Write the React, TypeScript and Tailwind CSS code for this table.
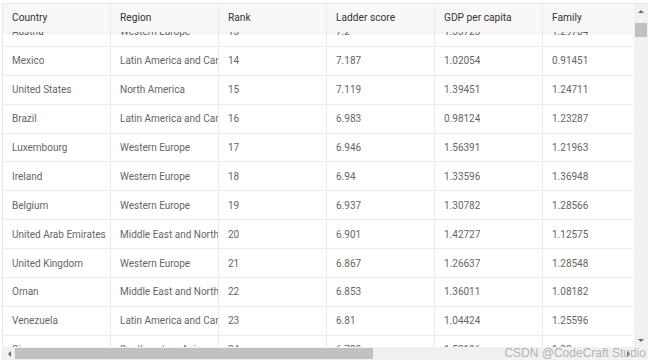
const columns = ["Country", "Region", "Rank", "Ladder score", "GDP per capita", "Family", "Health", "Freedom", "Generosity", "Trust"];

const rows = [
  ["Austria", "Western Europe", "13", "7.2", "1.33723", "1.29704", "0.89042", "0.62433", "0.33088", "0.18676"],
  ["Mexico", "Latin America and Caribbean", "14", "7.187", "1.02054", "0.91451", "0.81444", "0.48181", "0.14074", "0.21312"],
  ["United States", "North America", "15", "7.119", "1.39451", "1.24711", "0.86179", "0.54604", "0.40105", "0.1589"],
  ["Brazil", "Latin America and Caribbean", "16", "6.983", "0.98124", "1.23287", "0.69702", "0.49049", "0.14574", "0.17521"],
  ["Luxembourg", "Western Europe", "17", "6.946", "1.56391", "1.21963", "0.91894", "0.61583", "0.28034", "0.37798"],
  ["Ireland", "Western Europe", "18", "6.94", "1.33596", "1.36948", "0.89533", "0.61777", "0.45901", "0.28703"],
  ["Belgium", "Western Europe", "19", "6.937", "1.30782", "1.28566", "0.89667", "0.5845", "0.2225", "0.2254"],
  ["United Arab Emirates", "Middle East and Northern Africa", "20", "6.901", "1.42727", "1.12575", "0.80925", "0.64157", "0.26428", "0.38583"],
  ["United Kingdom", "Western Europe", "21", "6.867", "1.26637", "1.28548", "0.90943", "0.59625", "0.51912", "0.32067"],
  ["Oman", "Middle East and Northern Africa", "22", "6.853", "1.36011", "1.08182", "0.76276", "0.63274", "0.21542", "0.32524"],
  ["Venezuela", "Latin America and Caribbean", "23", "6.81", "1.04424", "1.25596", "0.72052", "0.42908", "0.05841", "0.11069"],
  ["Singapore", "Southeastern Asia", "24", "6.798", "1.52186", "1.02", "1.02525", "0.54252", "0.4921", "0.31105"],
];

function Arrow({ dir }: { dir: "up" | "down" | "left" | "right" }) {
  const pts = {
    up: "0,4 3,1 6,4",
    down: "0,1 3,4 6,1",
    left: "4,0 1,3 4,6",
    right: "1,0 4,3 1,6",
  }[dir];
  const size = dir === "up" || dir === "down" ? { w: 6, h: 5 } : { w: 5, h: 6 };
  return (
    <svg width={size.w} height={size.h} viewBox={`0 0 ${size.w} ${size.h}`}>
      <polygon points={pts} fill="#6b6b6b" />
    </svg>
  );
}

export default function App() {
  return (
    <div className="relative w-[650px] h-[364px] bg-white font-['Roboto','Liberation_Sans',sans-serif] overflow-hidden">
      <div className="ml-[2px] mt-[3px] w-[646px] h-[357px] flex flex-col border-t border-l border-[#e8e8e8]">
        <div className="flex flex-1 min-h-0">
          {/* table area */}
          <div className="flex-1 min-w-0 flex flex-col overflow-hidden">
            <div className="relative z-10 flex h-[28px] shrink-0 bg-[#f8f8f8] shadow-[0_1px_3px_rgba(0,0,0,0.08)]">
              {columns.map((c) => (
                <div
                  key={c}
                  className="w-[108px] shrink-0 border-r border-[#ebebeb] pl-[9px] flex items-center text-[10.2px] text-[#333333] whitespace-nowrap overflow-hidden"
                >
                  {c}
                </div>
              ))}
            </div>
            <div className="flex-1 min-h-0 overflow-hidden">
              <div className="-mt-[14px]">
                {rows.map((r) => (
                  <div key={r[0]} className="flex h-[28.9px] border-b border-[#ebebeb]">
                    {r.map((v, i) => (
                      <div
                        key={i}
                        className="w-[108px] shrink-0 border-r border-[#ebebeb] pl-[9px] flex items-center text-[10px] text-[#666666] whitespace-nowrap overflow-hidden"
                      >
                        <span className="block overflow-hidden">{v}</span>
                      </div>
                    ))}
                  </div>
                ))}
              </div>
            </div>
          </div>
          {/* vertical scrollbar */}
          <div className="w-[14px] shrink-0 bg-[#f1f1f1] flex flex-col items-center">
            <div className="h-[14px] flex items-center justify-center">
              <Arrow dir="up" />
            </div>
            <div className="flex-1 w-full px-[1px] pt-[5px]">
              <div className="h-[14px] w-full bg-[#c1c1c1]" />
            </div>
            <div className="h-[14px] flex items-center justify-center">
              <Arrow dir="down" />
            </div>
          </div>
        </div>
        {/* horizontal scrollbar */}
        <div className="flex h-[13px] shrink-0">
          <div className="flex-1 bg-[#f1f1f1] flex items-center">
            <div className="w-[12px] flex items-center justify-center">
              <Arrow dir="left" />
            </div>
            <div className="flex-1 h-full py-[1px]">
              <div className="w-[358px] h-full bg-[#c1c1c1]" />
            </div>
            <div className="w-[12px] flex items-center justify-center">
              <Arrow dir="right" />
            </div>
          </div>
          <div className="w-[14px] bg-[#f3f3f3]" />
        </div>
      </div>
      <div className="absolute right-[4px] bottom-[2px] text-[12px] text-[#a0a0a0]/80 font-['Liberation_Sans',sans-serif] whitespace-nowrap">
        CSDN @CodeCraft Studio
      </div>
    </div>
  );
}
